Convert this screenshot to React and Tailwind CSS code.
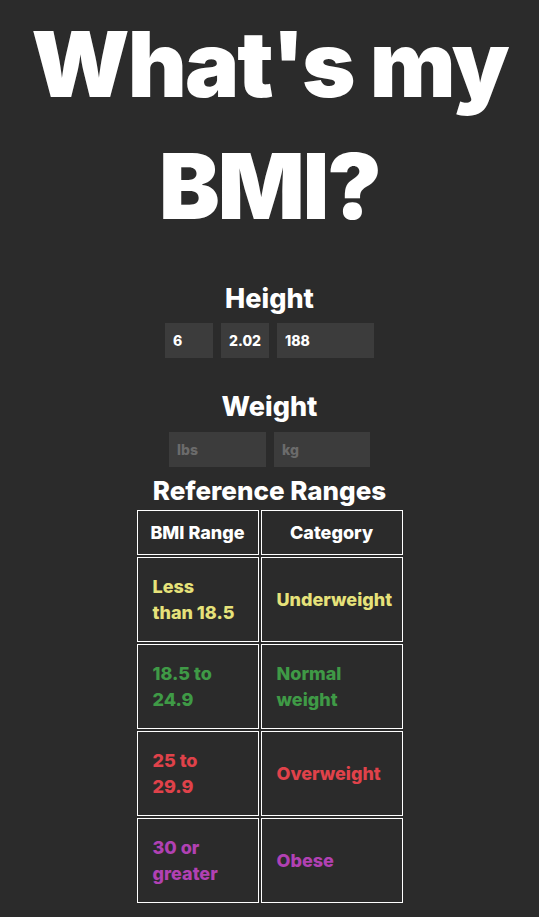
import React from "react";

const rows = [
  { range: ["Less", "than 18.5"], cat: "Underweight", color: "text-[#e6e27a]" },
  { range: ["18.5 to", "24.9"], cat: ["Normal", "weight"], color: "text-[#3f9a46]" },
  { range: ["25 to", "29.9"], cat: "Overweight", color: "text-[#e0424a]" },
  { range: ["30 or", "greater"], cat: "Obese", color: "text-[#b141b3]" },
];

function Lines({ v }) {
  if (Array.isArray(v)) {
    return (
      <span>
        {v[0]}
        <br />
        {v[1]}
      </span>
    );
  }
  return <span className="whitespace-nowrap">{v}</span>;
}

const inputCls =
  "h-[35px] bg-[#3c3c3c] pl-[8px] text-[14px] font-extrabold text-white placeholder:text-[#6b6b6b] outline-none";

export default function App() {
  return (
    <div
      className="min-h-[917px] bg-[#2b2b2b] text-white flex flex-col items-center"
      style={{ fontFamily: "Inter, 'Noto Sans', sans-serif" }}
    >
      <h1 className="pt-[3px] text-[91px] leading-[122px] font-black text-center tracking-[-2px]">
        What's my BMI?
      </h1>

      <h2 className="mt-[36px] text-[27px] leading-[32px] font-extrabold">Height</h2>
      <div className="mt-[8px] flex gap-2">
        <input className={`w-[48px] ${inputCls}`} defaultValue="6" />
        <input className={`w-[48px] ${inputCls}`} defaultValue="2.02" />
        <input className={`w-[97px] ${inputCls}`} defaultValue="188" />
      </div>

      <h2 className="mt-[33px] text-[27px] leading-[32px] font-extrabold">Weight</h2>
      <div className="mt-[9px] flex gap-2">
        <input className={`w-[97px] ${inputCls}`} placeholder="lbs" />
        <input className={`w-[96px] ${inputCls}`} placeholder="kg" />
      </div>

      <h2 className="mt-[8px] text-[26px] leading-[32px] font-extrabold">Reference Ranges</h2>
      <div className="mt-[3px] grid grid-cols-[122px_142px] gap-[2px] text-[18px] leading-[26px] font-extrabold">
        <div className="h-[45px] border border-white flex items-center justify-center whitespace-nowrap">
          BMI Range
        </div>
        <div className="h-[45px] border border-white flex items-center justify-center">Category</div>
        {rows.map((r, i) => (
          <React.Fragment key={i}>
            <div className={`h-[85px] border border-white flex items-center px-[15px] ${r.color}`}>
              <Lines v={r.range} />
            </div>
            <div className={`h-[85px] border border-white flex items-center px-[15px] ${r.color}`}>
              <Lines v={r.cat} />
            </div>
          </React.Fragment>
        ))}
      </div>
    </div>
  );
}
